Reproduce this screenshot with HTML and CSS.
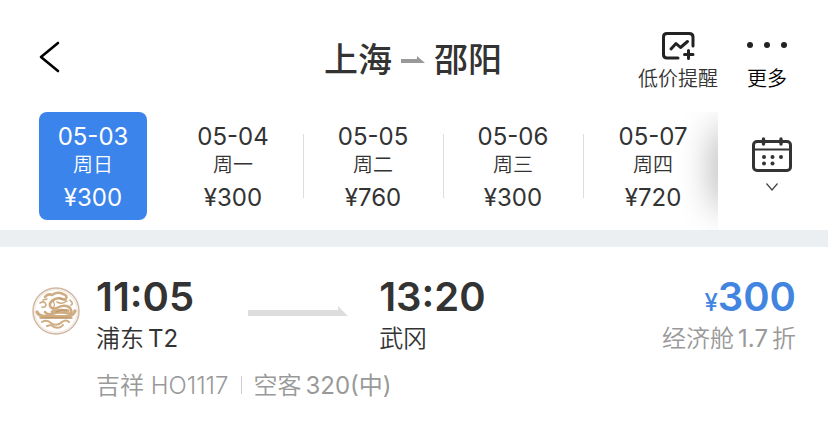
FILE: index.html
```html
<!DOCTYPE html>
<html lang="zh-CN">
<head>
  <meta charset="UTF-8" />
  <meta name="viewport" content="width=device-width, initial-scale=1" />
  <title>上海 - 邵阳</title>
  <link rel="stylesheet" href="styles.css">
</head>
<body>
  <header class="header">
    <button class="back" type="button" aria-label="返回">
      <svg width="22" height="34" viewBox="0 0 22 34"><path d="M20 3 L3 17 L20 31" fill="none" stroke="#000" stroke-width="2.6" stroke-linecap="round" stroke-linejoin="round"/></svg>
    </button>
    <h1 class="title">
      <span>上海</span>
      <svg width="24" height="8" viewBox="0 0 24 8"><path d="M0 3 H16 V0 L24 7 H0 Z" fill="#999"/></svg>
      <span>邵阳</span>
    </h1>
    <nav class="actions">
      <button class="action" type="button">
        <svg width="34" height="30" viewBox="0 0 34 30" fill="none" stroke="#222" stroke-width="3" stroke-linecap="round" stroke-linejoin="round">
          <path d="M17 28 H6 Q2.500 28 2.500 24.500 V7 Q2.500 3.500 6 3.500 H28 Q32 3.500 32 7 V16"/>
          <path d="M10 19 L15 13.500 L19.500 17.500 L26.500 11.500"/>
          <path d="M27.500 20.500 V28.500 M23.500 24.500 H32"/>
        </svg>
        <span>低价提醒</span>
      </button>
      <button class="action more" type="button">
        <svg width="42" height="30" viewBox="0 0 42 30" fill="#222"><circle cx="4" cy="15" r="3"/><circle cx="21" cy="15" r="3"/><circle cx="38" cy="15" r="3"/></svg>
        <span>更多</span>
      </button>
    </nav>
  </header>

  <div class="datebar">
    <div class="dates">
      <button class="date active" type="button"><span>05-03</span><span class="week">周日</span><span class="fare">¥300</span></button>
      <button class="date" type="button"><span>05-04</span><span class="week">周一</span><span class="fare">¥300</span></button>
      <button class="date" type="button"><span>05-05</span><span class="week">周二</span><span class="fare">¥760</span></button>
      <button class="date" type="button"><span>05-06</span><span class="week">周三</span><span class="fare">¥300</span></button>
      <button class="date" type="button"><span>05-07</span><span class="week">周四</span><span class="fare">¥720</span></button>
    </div>
    <button class="calendar" type="button" aria-label="选择日期">
      <svg width="40" height="36" viewBox="0 0 40 36" fill="none" stroke="#333" stroke-width="3">
        <rect x="1.500" y="4.500" width="37" height="29" rx="3.500"/>
        <path d="M2 12.500 H38" stroke-width="2"/>
        <path d="M11.500 2 V7 M29 2 V7" stroke-width="3.400" stroke-linecap="round"/>
        <g fill="#333" stroke="none"><circle cx="12" cy="20" r="2"/><circle cx="20.500" cy="20" r="2"/><circle cx="29" cy="20" r="2"/><circle cx="12" cy="26.500" r="2"/><circle cx="20.500" cy="26.500" r="2"/></g>
      </svg>
      <svg width="14" height="10" viewBox="0 0 14 10"><path d="M1.500 1.500 L7 8 L12.500 1.500" fill="none" stroke="#444" stroke-width="1.200"/></svg>
    </button>
  </div>

  <main class="flights">
    <article class="flight">
      <svg class="logo" viewBox="0 0 48 48" fill="none" stroke="#cfac82" stroke-linecap="round" stroke-linejoin="round">
        <circle cx="24" cy="24" r="23" stroke="#d0b8a4" stroke-width="1.500"/>
        <circle cx="24" cy="24" r="21.300" stroke="#f0e4d8" stroke-width="1"/>
        <path d="M13 10 Q16 6 20 8 Q25 4 31 7 Q37 9 33 13 Q28 10 23 12 Q17 15 18 19 Q20 23 25 21 Q31 17 37 20 Q41 24 38 27 Q28 24 20 27 Q15 28 13 25" stroke-width="2.600"/>
        <path d="M20 25 Q27 22 36 24" stroke-width="3"/>
        <path d="M5 25 Q7 29.500 14 29.500 H34 Q41 29.500 43 24" stroke-width="3.200"/>
        <path d="M8 31 H40" stroke="#bd9466" stroke-width="1.300"/>
        <path d="M25 15 Q30 18 35 14 M38 13 Q42 17 39 18 M8 16 Q13 13 14 18 Q13 21 10 20 M15 12 L11 13" stroke-width="1.600"/>
        <path d="M10 35 Q15 32 19 36 Q25 40 30 35 Q34 32 37 35 M15 39 Q19 37 22 40 Q28 42 31 38" stroke-width="2"/>
        <path d="M21 14 Q24 18 21 21 M27 11 L31 13 M24 25 Q29 22 35 23" stroke="#b88e60" stroke-width="1"/>
      </svg>
      <div class="route">
        <div class="stop">
          <time class="time">11:05</time>
          <span class="airport">浦东<span class="num">T2</span></span>
        </div>
        <svg class="arrow" width="100" height="10" viewBox="0 0 100 10"><path d="M0 4 H90 V0 L100 10 H0 Z" fill="#ddd"/></svg>
        <div class="stop">
          <time class="time">13:20</time>
          <span class="airport">武冈</span>
        </div>
      </div>
      <div class="price">
        <span class="amount"><small>¥</small>300</span>
        <span class="cabin">经济舱<span class="num">1.7</span>折</span>
      </div>
      <p class="detail"><span>吉祥 HO1117</span><span class="plane">空客<span class="num">320(中)</span></span></p>
    </article>
  </main>
</body>
</html>
```
FILE: styles.css
```css
* { box-sizing: border-box; }
body { margin: 0; background: #fff; color: #333; font-family: Inter, "Noto Sans CJK SC", sans-serif; font-size: 24px; }
button { padding: 0; border: none; background: none; color: inherit; font: inherit; cursor: pointer; }
svg { display: block; }

.header { display: grid; grid-template-columns: 1fr auto 1fr; align-items: start; padding: 30px 40px 0 38px; height: 112px; }
.back { justify-self: start; padding-top: 10px; }
.title { display: flex; align-items: center; gap: 9px; margin: 5px 0 0; font-size: 34px; font-weight: 500; line-height: 50px; }
.actions { display: flex; justify-self: end; gap: 28px; }
.action { display: flex; flex-direction: column; align-items: center; font-size: 20px; font-weight: 350; line-height: 38px; }
.action svg { height: 30px; }
.more { color: #000; }

.datebar { display: flex; height: 118px; }
.dates { position: relative; display: flex; flex: 1; min-width: 0; padding-left: 39px; gap: 32px; overflow: hidden; }
/* fade at the edge of the scrolling dates */
.dates::after { content: ""; position: absolute; top: 16px; right: -20px; width: 20px; height: 80px; border-radius: 10px; box-shadow: 0 0 36px rgba(0, 0, 0, 0.45); }
.date { position: relative; display: flex; flex-direction: column; align-items: center; flex: none; width: 108px; height: 108px; padding-top: 11px; border-radius: 8px; line-height: 28px; }
.date.active { background: #3b84ec; color: #fff; }
.date:nth-child(n+3)::before { content: ""; position: absolute; left: -16px; top: 22px; width: 1px; height: 64px; background: #ddd; }
.week { font-size: 20px; font-weight: 350; }
.fare { margin-top: 5px; }
.calendar { display: flex; flex-direction: column; align-items: center; flex: none; width: 110px; padding: 25px 2px 0 0; gap: 9px; }

.flights { border-top: 17px solid #eceff2; }
.flight { display: grid; grid-template-columns: 48px 1fr auto; column-gap: 16px; padding: 26px 32px 16px; }
.logo { width: 48px; height: 48px; margin-top: 14px; }
.route { display: flex; }
.stop { display: flex; flex-direction: column; }
.time { font-size: 40px; font-weight: 600; line-height: 48px; }
.airport, .cabin { line-height: 36px; font-weight: 350; }
.num { margin-left: 4px; font-weight: 400; }
.cabin .num { margin-right: 4px; }
.arrow { margin: 33px 31px 0 54px; }
.price { display: flex; flex-direction: column; align-items: flex-end; }
.amount { color: #4285e0; font-size: 40px; font-weight: 600; line-height: 48px; }
.amount small { font-size: 24px; font-weight: 500; line-height: 24px; }
.cabin, .detail { color: #999; }
.detail { display: flex; align-items: center; grid-column: 2 / 4; margin: 13px 0 0; font-weight: 350; line-height: 32px; }
.plane::before { content: ""; display: inline-block; width: 1px; height: 18px; margin: 0 12px; background: #ccc; }
```
